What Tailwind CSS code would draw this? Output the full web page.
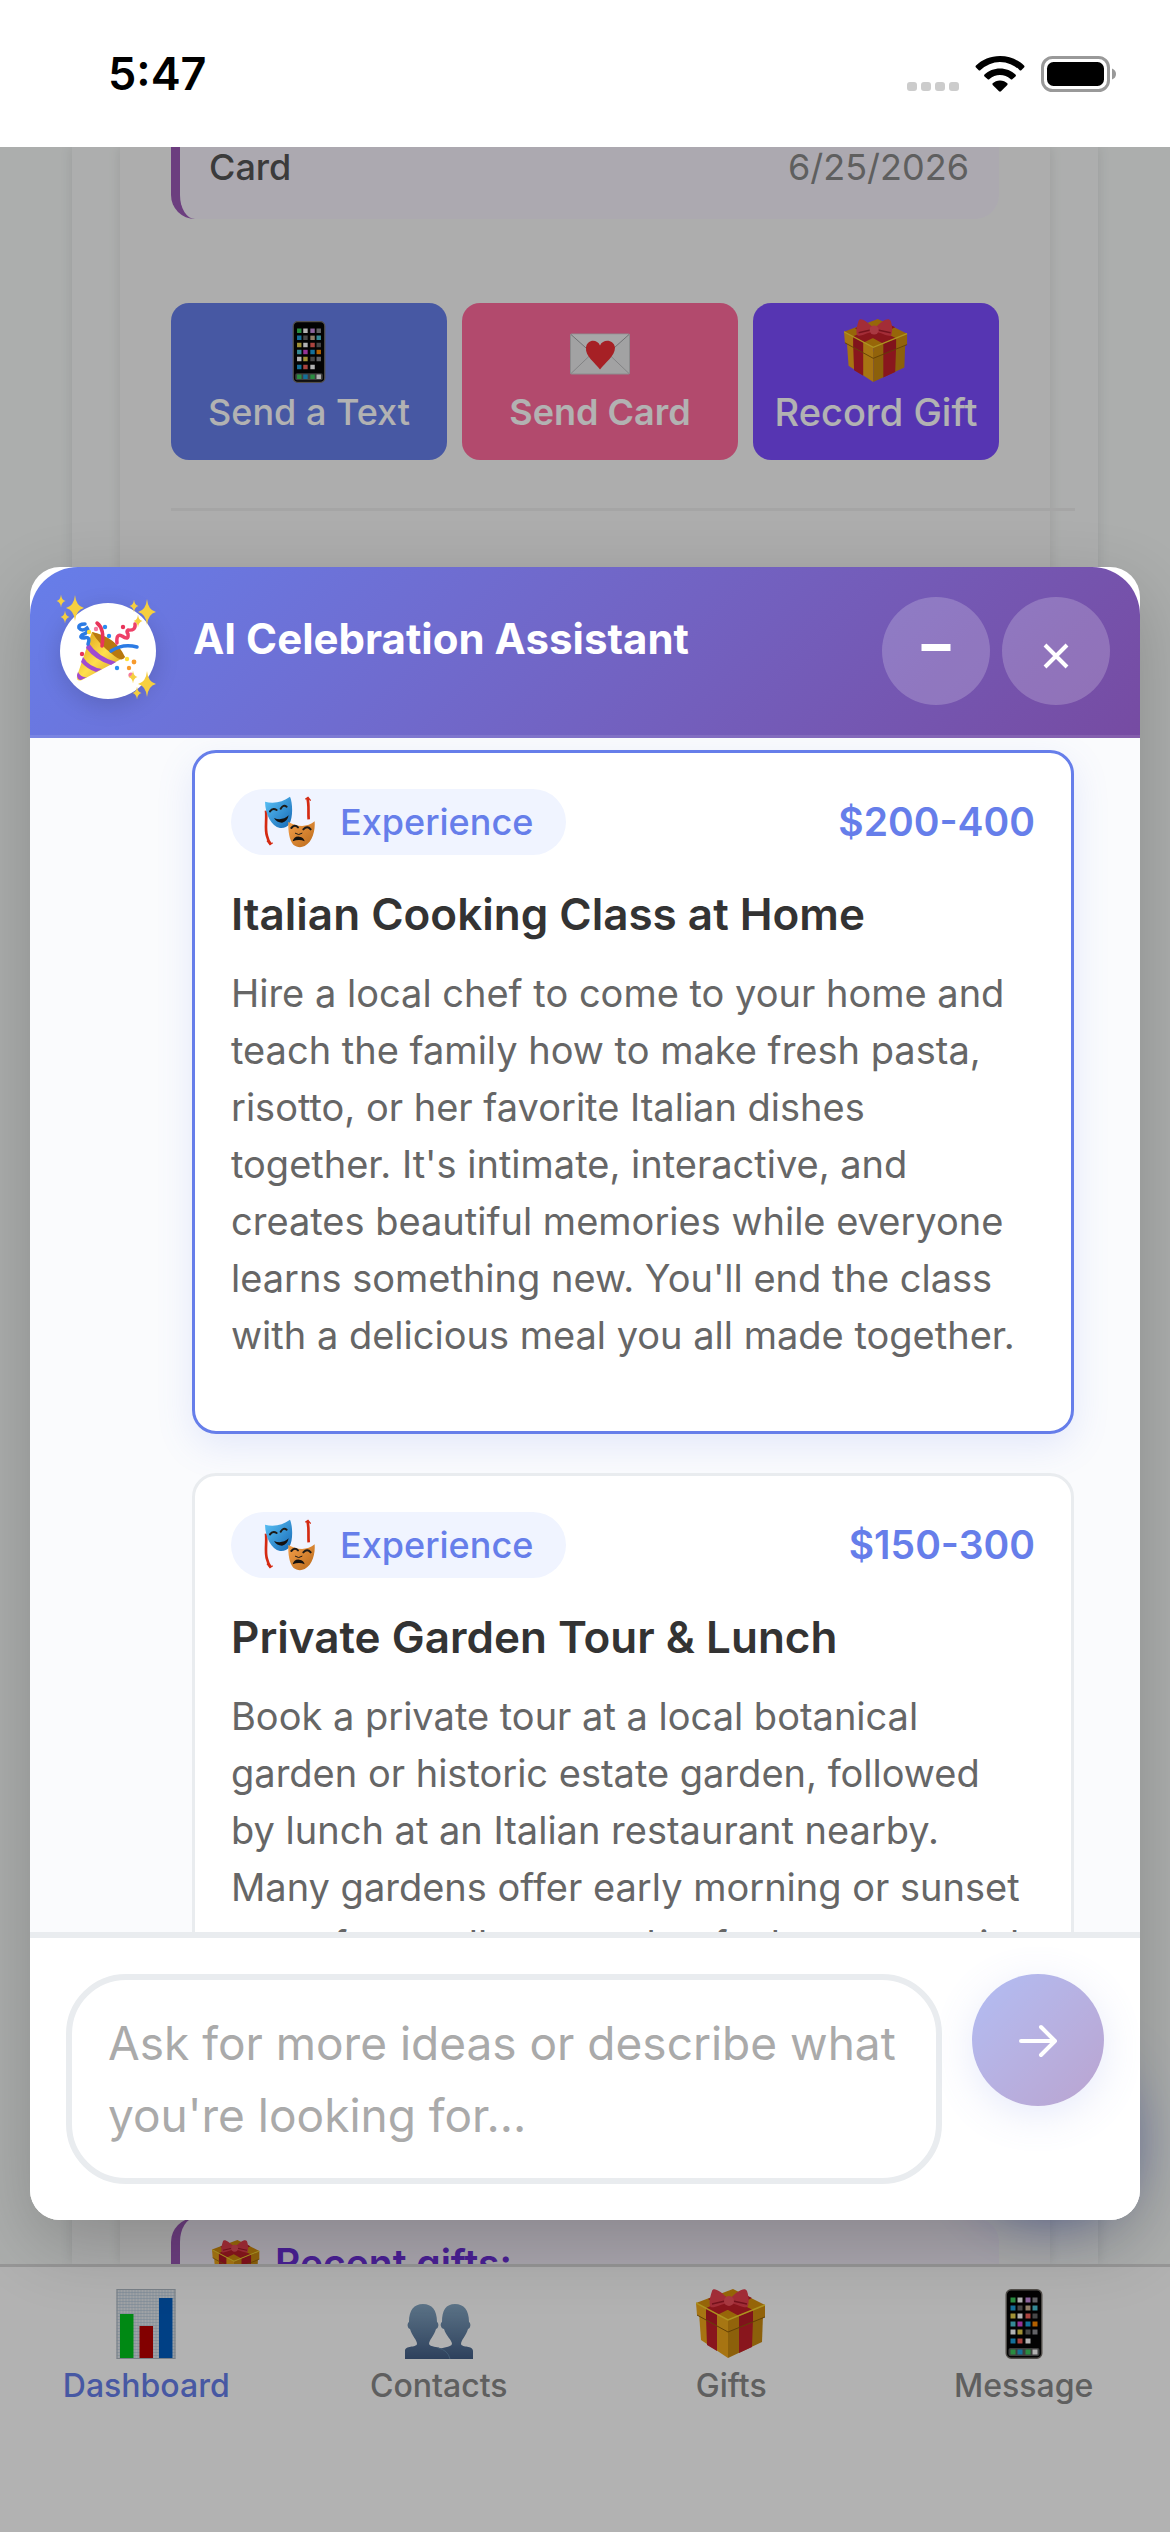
<!DOCTYPE html>
<html lang="en">

<head>
    <meta charset="UTF-8">
    <meta name="viewport" content="width=device-width, initial-scale=1.0">
    <title>AI Celebration Assistant</title>
    <script src="https://cdn.jsdelivr.net/npm/@tailwindcss/browser@4"></script>
</head>

<body class="font-['Inter',sans-serif] bg-white">

    <!-- Shared icons -->
    <svg class="absolute size-0" aria-hidden="true">
        <defs>
            <linearGradient id="people-fill" x1="0" y1="0" x2="0" y2="1">
                <stop offset="0" stop-color="#84a6c2" />
                <stop offset="1" stop-color="#425d85" />
            </linearGradient>
            <linearGradient id="blue-mask" x1="0" y1="0" x2="1" y2="1">
                <stop offset="0" stop-color="#5cc4f8" />
                <stop offset="1" stop-color="#1668b4" />
            </linearGradient>
            <linearGradient id="orange-mask" x1="0" y1="0" x2="1" y2="1">
                <stop offset="0" stop-color="#f5a04a" />
                <stop offset="1" stop-color="#b9691a" />
            </linearGradient>
            <linearGradient id="cone-fill" x1="0" y1="0" x2="1" y2="1">
                <stop offset="0" stop-color="#d9960f" />
                <stop offset=".5" stop-color="#ffdf4d" />
                <stop offset="1" stop-color="#c98a12" />
            </linearGradient>
            <pattern id="graph-paper" width="3" height="3" patternUnits="userSpaceOnUse">
                <rect width="3" height="3" fill="#e6eaee" />
                <path d="M0 0h3M0 0v3" stroke="#a9c0d6" stroke-width="1" />
            </pattern>
        </defs>
        <symbol id="icon-phone" viewBox="0 0 37 70">
            <rect x="0.7" y="0.7" width="35.6" height="68.6" rx="5" fill="#050505" stroke="#77726c" stroke-width="1.4" />
            <rect x="3" y="59" width="31" height="8" rx="2" fill="#5a5a5a" />
            <g stroke-width="5">
                <path d="M5 11h5M5 63h5M20 63h5" stroke="#3cc95c" />
                <path d="M12 11h5M12 27h5M5 43h5M20 52h5M27 63h5" stroke="#fff" />
                <path d="M20 11h5" stroke="#c78fe0" />
                <path d="M27 11h5M27 43h5" stroke="#8e8e93" />
                <path d="M5 19h5M20 35h5M5 52h5M12 63h5" stroke="#1ea0dc" />
                <path d="M12 19h5M27 27h5M20 43h5" stroke="#666" />
                <path d="M20 19h5" stroke="#cdb596" />
                <path d="M27 19h5M5 35h5" stroke="#4cc4d4" />
                <path d="M5 27h5M12 43h5" stroke="#e6cf4c" />
                <path d="M20 27h5M12 52h5" stroke="#f4605a" />
                <path d="M12 35h5" stroke="#d648d6" />
                <path d="M27 35h5" stroke="#ff8a00" />
            </g>
        </symbol>
        <symbol id="icon-gift" viewBox="0 0 70 70">
            <path d="M3 24L5 51L32 69V36z" fill="#efa71a" />
            <path d="M67 26L66 53L32 69V36z" fill="#c98a10" />
            <path d="M10 28L11 56L21 62V34zM43 36V64L56 58L57 30z" fill="#c4202a" />
            <path d="M0 14L37 0L69 16L32 31z" fill="#d9920e" />
            <path d="M10 19L46 4L56 9L21 26zM43 27L12 10L24 5L57 21z" fill="#c4202a" />
            <path d="M0 14L32 31V43L1 26z" fill="#f0a91c" />
            <path d="M69 16L32 31V43L69 28z" fill="#d18f10" />
            <path d="M10 19L21 25V37L10 31zM43 27L57 21V33L43 39z" fill="#b81c28" />
            <path d="M0 14L32 31L69 16" fill="none" stroke="#f8d32e" stroke-width="1.5" />
            <path d="M1 26L32 43L69 28" fill="none" stroke="#8f5c08" stroke-width="1" />
            <path d="M32 10C24 1 17 -2 16 2C14 8 13 13 14 17C16 21 24 15 32 14zM34 10C42 1 49 -2 51 2C53 8 53 13 52 17C50 21 42 15 34 14z" fill="#ea4150" />
            <path d="M29 12L16 15M37 12L51 15" stroke="#a81c2a" stroke-width="1.5" />
            <circle cx="33" cy="12" r="5" fill="#f2525e" />
        </symbol>
        <symbol id="icon-letter" viewBox="0 0 60 41">
            <rect x="0.5" y="0.5" width="59" height="40" rx="1" fill="#e9e9ea" stroke="#c9c9cb" />
            <path d="M1 40L23 19M59 40L37 19" stroke="#bcbcbf" />
            <path d="M1 1L30 27L59 1" fill="#f0f0f1" stroke="#a2a2a6" />
            <path d="M30 36C25 29 15 23 16 14C17 6 27 5 30 12C33 5 44 6 45 14C45 23 35 29 30 36z" fill="#ee2f35" />
        </symbol>
        <symbol id="icon-chart" viewBox="0 0 59 70">
            <rect width="59" height="70" fill="url(#graph-paper)" />
            <rect x="0.5" y="0.5" width="58" height="69" fill="none" stroke="#aeb8c2" />
            <path d="M3.5 25h13.5v44H3.5z" fill="#00c41e" />
            <path d="M23 37h13.5v32H23z" fill="#bb0000" />
            <path d="M42.5 9H56v60H42.5z" fill="#005cbf" />
        </symbol>
        <symbol id="icon-people" viewBox="0 0 68 56">
            <path d="M34 56V48C36 43 46 45 47 41C47 37 41 33 39 26C35 25 35 20 37 19C37 7 41 1 50 1C59 1 64 7 64 19C66 20 66 25 63 26C61 33 56 37 56 41C57 45 68 42 68 48V56z" fill="url(#people-fill)" />
            <path d="M0 56V48C0 42 11 45 12 41C12 37 7 33 5 26C2 25 2 20 4 19C4 7 9 1 18 1C27 1 32 7 32 19C34 20 34 25 31 26C29 33 24 37 24 41C26 46 42 41 45 56z" fill="url(#people-fill)" />
            <path d="M33 45Q43 47 45 56" fill="none" stroke="#5f84a8" stroke-width="1" />
        </symbol>
        <symbol id="icon-masks" viewBox="0 0 156 156">
            <path d="M6 44C9 70 2 100 9 120Q12 134 20 144M130 6C136 26 132 44 134 70" fill="none" stroke="#d42a12" stroke-width="8" />
            <path d="M9 134L18 146L26 140M124 10L132 4L140 14" fill="none" stroke="#d42a12" stroke-width="4" />
            <path d="M3 17C30 24 56 18 78 2C86 20 88 64 76 84C70 93 60 97 48 96C22 90 4 56 3 17z" fill="url(#blue-mask)" />
            <path d="M73 78C96 92 130 96 152 76C154 104 146 138 122 150C110 156 98 154 88 146C76 132 72 106 73 78z" fill="url(#orange-mask)" />
            <g fill="none" stroke="#1d1a17" stroke-width="6" stroke-linecap="round">
                <path d="M18 46Q26 34 38 42M50 38Q58 24 68 32M82 96Q92 84 102 94M118 100Q130 88 140 100" />
                <path d="M94 112Q104 120 114 112" stroke-width="3" />
            </g>
            <path d="M30 66Q54 76 74 58Q70 78 54 80Q38 80 30 66zM86 136Q90 120 106 122Q120 124 122 136Q106 128 86 136z" fill="#14110f" />
        </symbol>
        <symbol id="icon-spark" viewBox="-10 -14 20 28">
            <path d="M0 -13Q1 -2 9 0Q1 2 0 13Q-1 2 -9 0Q-1 -2 0 -13z" fill="#f6cf3f" />
        </symbol>
    </svg>

    <div class="flex flex-col h-screen overflow-hidden">

        <!-- Status bar -->
        <header class="h-[147px] shrink-0 flex justify-between items-center pl-[108px] pr-[54px]">
            <time class="text-[45px] leading-none font-semibold text-black">5:47</time>
            <div class="flex items-center gap-4">
                <svg class="w-[52px] h-9" viewBox="0 0 52 36" fill="#ccc" aria-label="No signal">
                    <rect x="0" y="26" width="10" height="9" rx="3" />
                    <rect x="14" y="26" width="10" height="9" rx="3" />
                    <rect x="28" y="26" width="10" height="9" rx="3" />
                    <rect x="42" y="26" width="10" height="9" rx="3" />
                </svg>
                <svg class="w-[50px] h-9" viewBox="0 0 50 36" aria-label="Wi-Fi">
                    <path d="M25 0C34.5 0 43 3.7 49 9.5Q50 10.5 49 11.5L46.5 14Q45.5 15 44.5 14A28 28 0 0 0 5.5 14Q4.5 15 3.5 14L1 11.5Q0 10.5 1 9.5C7 3.7 15.5 0 25 0z" />
                    <path d="M25 12.5C31 12.5 36.5 14.8 40.5 18.5Q41.5 19.5 40.5 20.5L37.5 23Q36.5 24 35.5 23A16 16 0 0 0 14.5 23Q13.5 24 12.5 23L9.5 20.5Q8.5 19.5 9.5 18.5C13.5 14.8 19 12.5 25 12.5z" />
                    <path d="M25 24.5C28 24.5 30.5 25.6 32.3 27.3Q33 28 32.3 29L26 35.3Q25 36 24 35.3L17.7 29Q17 28 17.7 27.3C19.5 25.6 22 24.5 25 24.5z" />
                </svg>
                <svg class="w-[75px] h-9" viewBox="0 0 75 36" aria-label="Battery full">
                    <rect x="1.5" y="1.5" width="66" height="33" rx="10" fill="none" stroke="#999" stroke-width="3" />
                    <rect x="6" y="6" width="57" height="24" rx="6.5" />
                    <path d="M71 12.5Q75 14 75 18Q75 22 71 23.5z" fill="#999" />
                </svg>
            </div>
        </header>

        <div class="relative flex-1 min-h-0 flex flex-col bg-[#f6f9f8] overflow-hidden">

            <!-- Dashboard behind the assistant -->
            <main class="flex-1 min-h-0 mx-[72px] px-12 flex flex-col bg-[#f8faf9] shadow-[0_0_12px_rgba(0,0,0,0.1)]">
                <section class="flex-1 min-h-0 px-[51px] flex flex-col bg-[#f8f8f8] shadow-[0_0_12px_rgba(0,0,0,0.1)]">
                    <div class="h-[72px] shrink-0 pl-[29px] pr-[30px] flex justify-between items-start rounded-b-3xl border-l-[9px] border-[#9b59b6] bg-[#f7f3fd] text-[36px] leading-10">
                        <span class="font-medium text-[#555]">Card</span>
                        <span class="text-[#888]">6/25/2026</span>
                    </div>

                    <div class="mt-[84px] flex gap-[15px] text-[36px] leading-[46px] font-medium text-white">
                        <button class="w-[276px] h-[157px] pt-4 flex flex-col items-center gap-1 rounded-[18px] bg-[#667eea]">
                            <svg class="h-[66px] w-[66px] py-[2px]"><use href="#icon-phone" /></svg>
                            Send a Text
                        </button>
                        <button class="w-[276px] h-[157px] pt-4 flex flex-col items-center gap-1 rounded-[18px] bg-[#ff6b9d] font-semibold">
                            <svg class="h-[66px] w-[60px] pt-1"><use href="#icon-letter" /></svg>
                            Send Card
                        </button>
                        <button class="flex-1 h-[157px] pt-4 flex flex-col items-center gap-1 rounded-[18px] bg-[#7c4dff] text-[38px] whitespace-nowrap">
                            <svg class="h-[66px] w-[64px] pb-[2px]"><use href="#icon-gift" /></svg>
                            Record Gift
                        </button>
                    </div>

                    <hr class="mt-12 -mr-[76px] border-t-[3px] border-[#ececec]">

                    <div class="mt-auto h-[46px] shrink-0 pl-8 pt-[22px] flex items-start gap-[15px] rounded-t-3xl border-l-[9px] border-[#9b59b6] bg-[#f5f0fb] overflow-hidden">
                        <svg class="size-12 shrink-0"><use href="#icon-gift" /></svg>
                        <h2 class="text-[39px] leading-[46px] font-semibold text-[#6b2fd6]">Recent gifts:</h2>
                    </div>
                </section>
            </main>

            <!-- Floating action button -->
            <button aria-label="Open assistant" class="absolute right-[45px] bottom-[330px] size-[150px] rounded-full bg-[#667eea] shadow-[0_12px_60px_rgba(102,126,234,0.9)]"></button>

            <!-- Tab bar -->
            <nav class="relative h-[268px] shrink-0 pt-[22px] grid grid-cols-4 items-start border-t-[3px] border-[#d9d9d9] bg-white text-[32px] leading-10 font-medium text-[#888]">
                <a href="#dashboard" class="flex flex-col items-center gap-[7px] text-[#667eea]">
                    <svg class="size-[70px]"><use href="#icon-chart" /></svg>
                    Dashboard
                </a>
                <a href="#contacts" class="flex flex-col items-center gap-[7px]">
                    <svg class="w-[68px] h-[70px] pt-[14px]"><use href="#icon-people" /></svg>
                    Contacts
                </a>
                <a href="#gifts" class="flex flex-col items-center gap-[7px]">
                    <svg class="size-[70px]"><use href="#icon-gift" /></svg>
                    Gifts
                </a>
                <a href="#message" class="flex flex-col items-center gap-[7px]">
                    <svg class="size-[70px]"><use href="#icon-phone" /></svg>
                    Message
                </a>
            </nav>

            <div class="absolute inset-0 bg-black/30"></div>

            <!-- Assistant dialog -->
            <div role="dialog" aria-labelledby="assistant-title" class="absolute inset-x-[30px] top-[420px] bottom-[312px] flex flex-col rounded-[30px] bg-white overflow-hidden shadow-[0_24px_72px_rgba(0,0,0,0.2)]">
                <div class="h-[171px] shrink-0 px-[30px] flex items-center gap-[37px] rounded-t-[48px] border-b-[3px] border-white/10 bg-linear-135 from-[#667eea] to-[#764ba2] bg-origin-border">
                    <div class="size-24 shrink-0 rounded-full bg-white shadow-[0_6px_24px_rgba(0,0,0,0.15)]">
                        <svg class="size-24 overflow-visible" viewBox="0 0 96 96">
                            <path d="M32 29Q50 34 65 54L22 77Q16 79 17 73z" fill="url(#cone-fill)" />
                            <path d="M32 29Q56 34 65 54Q62 60 52 51Q38 40 32 29z" fill="#b8780f" />
                            <path d="M28 39Q38 54 56 59L51 62Q35 57 26 45zM23 54Q29 64 42 66L36 69Q27 66 21 59zM18 69Q21 75 27 74L21 77Q17 77 17 72z" fill="#a04bd0" />
                            <g fill="none" stroke-width="3.5" stroke-linecap="round">
                                <path d="M25 21Q18 21 19 25Q22 29 27 25Q30 29 22 32Q19 35 24 35Q31 33 28 41M51 48Q63 40 77 44" stroke="#2b7be4" />
                                <path d="M37 20Q45 26 42 43" stroke="#e8345a" />
                                <path d="M57 40Q56 30 62 33Q69 38 68 31Q66 28 68 27Q76 28 75 21" stroke="#ee4068" />
                            </g>
                            <g fill="#f47aa0"><circle cx="36" cy="26" r="2.2" /><circle cx="71" cy="72" r="2.6" /></g>
                            <g fill="#e8345a"><circle cx="22" cy="51" r="2.2" /><circle cx="63" cy="24" r="2.2" /></g>
                            <g fill="#2b8cf0"><circle cx="45" cy="24" r="2.2" /><circle cx="49" cy="33" r="2.2" /><circle cx="57" cy="65" r="2.2" /></g>
                            <g fill="#f79a2c"><circle cx="69" cy="65" r="2.2" /><circle cx="74" cy="59" r="2.4" /></g>
                            <g fill="#ffe03a"><circle cx="29" cy="29" r="2.2" /><circle cx="67" cy="56" r="2.2" /></g>
                            <use href="#icon-spark" x="5" y="-9" width="20" height="28" />
                            <use href="#icon-spark" x="-4" y="-9" width="10" height="14" />
                            <use href="#icon-spark" x="0" y="7" width="10" height="14" />
                            <use href="#icon-spark" x="77" y="-5" width="20" height="28" />
                            <use href="#icon-spark" x="69" y="-4" width="10" height="14" />
                            <use href="#icon-spark" x="73" y="11" width="10" height="14" />
                            <use href="#icon-spark" x="77" y="67" width="20" height="28" />
                            <use href="#icon-spark" x="68" y="67" width="10" height="14" />
                            <use href="#icon-spark" x="72" y="83" width="10" height="14" />
                        </svg>
                    </div>
                    <h1 id="assistant-title" class="flex-1 pb-6 text-[42px] leading-[48px] font-bold text-white whitespace-nowrap">AI Celebration Assistant</h1>
                    <div class="flex gap-3">
                        <button aria-label="Minimize" class="size-[108px] rounded-full bg-white/20 flex items-center justify-center">
                            <svg class="size-12" viewBox="0 0 48 48"><path d="M9.5 17h29v7h-29z" fill="#fff" /></svg>
                        </button>
                        <button aria-label="Close" class="size-[108px] rounded-full bg-white/20 flex items-center justify-center">
                            <svg class="size-12" viewBox="0 0 48 48"><path d="M13 18l22 22M35 18l-22 22" stroke="#fff" stroke-width="4" /></svg>
                        </button>
                    </div>
                </div>

                <div class="flex-1 min-h-0 pl-[162px] pr-[66px] pt-3 flex flex-col gap-[39px] bg-[#fafbfd] overflow-hidden">
                    <article class="shrink-0 h-[684px] p-9 rounded-3xl border-[3px] border-[#667eea] bg-white shadow-[0_12px_36px_rgba(102,126,234,0.15)]">
                        <div class="flex justify-between items-center">
                            <span class="h-[66px] px-[33px] flex items-center gap-6 rounded-[33px] bg-[#f0f4ff] text-[36px] font-medium text-[#667eea]">
                                <svg class="size-[52px]"><use href="#icon-masks" /></svg>
                                Experience
                            </span>
                            <span class="text-[39px] font-semibold text-[#667eea]">$200-400</span>
                        </div>
                        <h3 class="mt-8 text-[44px] leading-[54px] font-semibold text-[#333]">Italian Cooking Class at Home</h3>
                        <p class="mt-6 pr-2 text-[38px] leading-[57px] text-[#666]">Hire a local chef to come to your home and teach the family how to make fresh pasta, risotto, or her favorite Italian dishes together. It's intimate, interactive, and creates beautiful memories while everyone learns something new. You'll end the class with a delicious meal you all made together.</p>
                    </article>
                    <article class="shrink-0 h-[684px] p-9 rounded-3xl border-[3px] border-[#e9ecef] bg-white">
                        <div class="flex justify-between items-center">
                            <span class="h-[66px] px-[33px] flex items-center gap-6 rounded-[33px] bg-[#f0f4ff] text-[36px] font-medium text-[#667eea]">
                                <svg class="size-[52px]"><use href="#icon-masks" /></svg>
                                Experience
                            </span>
                            <span class="text-[39px] font-semibold text-[#667eea]">$150-300</span>
                        </div>
                        <h3 class="mt-8 text-[44px] leading-[54px] font-semibold text-[#333]">Private Garden Tour &amp; Lunch</h3>
                        <p class="mt-6 pr-2 text-[38px] leading-[57px] text-[#666]">Book a private tour at a local botanical garden or historic estate garden, followed by lunch at an Italian restaurant nearby. Many gardens offer early morning or sunset tours for small groups that feel extra special</p>
                    </article>
                </div>

                <form class="shrink-0 px-9 py-9 flex items-start gap-[30px] border-t-[6px] border-[#e9ecef] bg-white">
                    <textarea aria-label="Message" rows="2" placeholder="Ask for more ideas or describe what you're looking for..." class="flex-1 min-w-0 h-[210px] py-[27px] pl-9 pr-6 rounded-[60px] border-[6px] border-[#e9ecef] text-[46px] leading-[72px] placeholder:text-[#aaa] resize-none overflow-hidden"></textarea>
                    <button type="button" aria-label="Send" class="size-[132px] shrink-0 flex items-center justify-center rounded-full bg-linear-135 from-[#667eea] to-[#764ba2] opacity-50 shadow-[0_9px_36px_rgba(102,126,234,0.3)]">
                        <svg class="size-12" viewBox="0 0 48 48" fill="none" stroke="#fff" stroke-width="4" stroke-linecap="round" stroke-linejoin="round"><path d="M7 25h34M27 11l14 14L27 39" /></svg>
                    </button>
                </form>
            </div>
        </div>
    </div>

</body>

</html>
